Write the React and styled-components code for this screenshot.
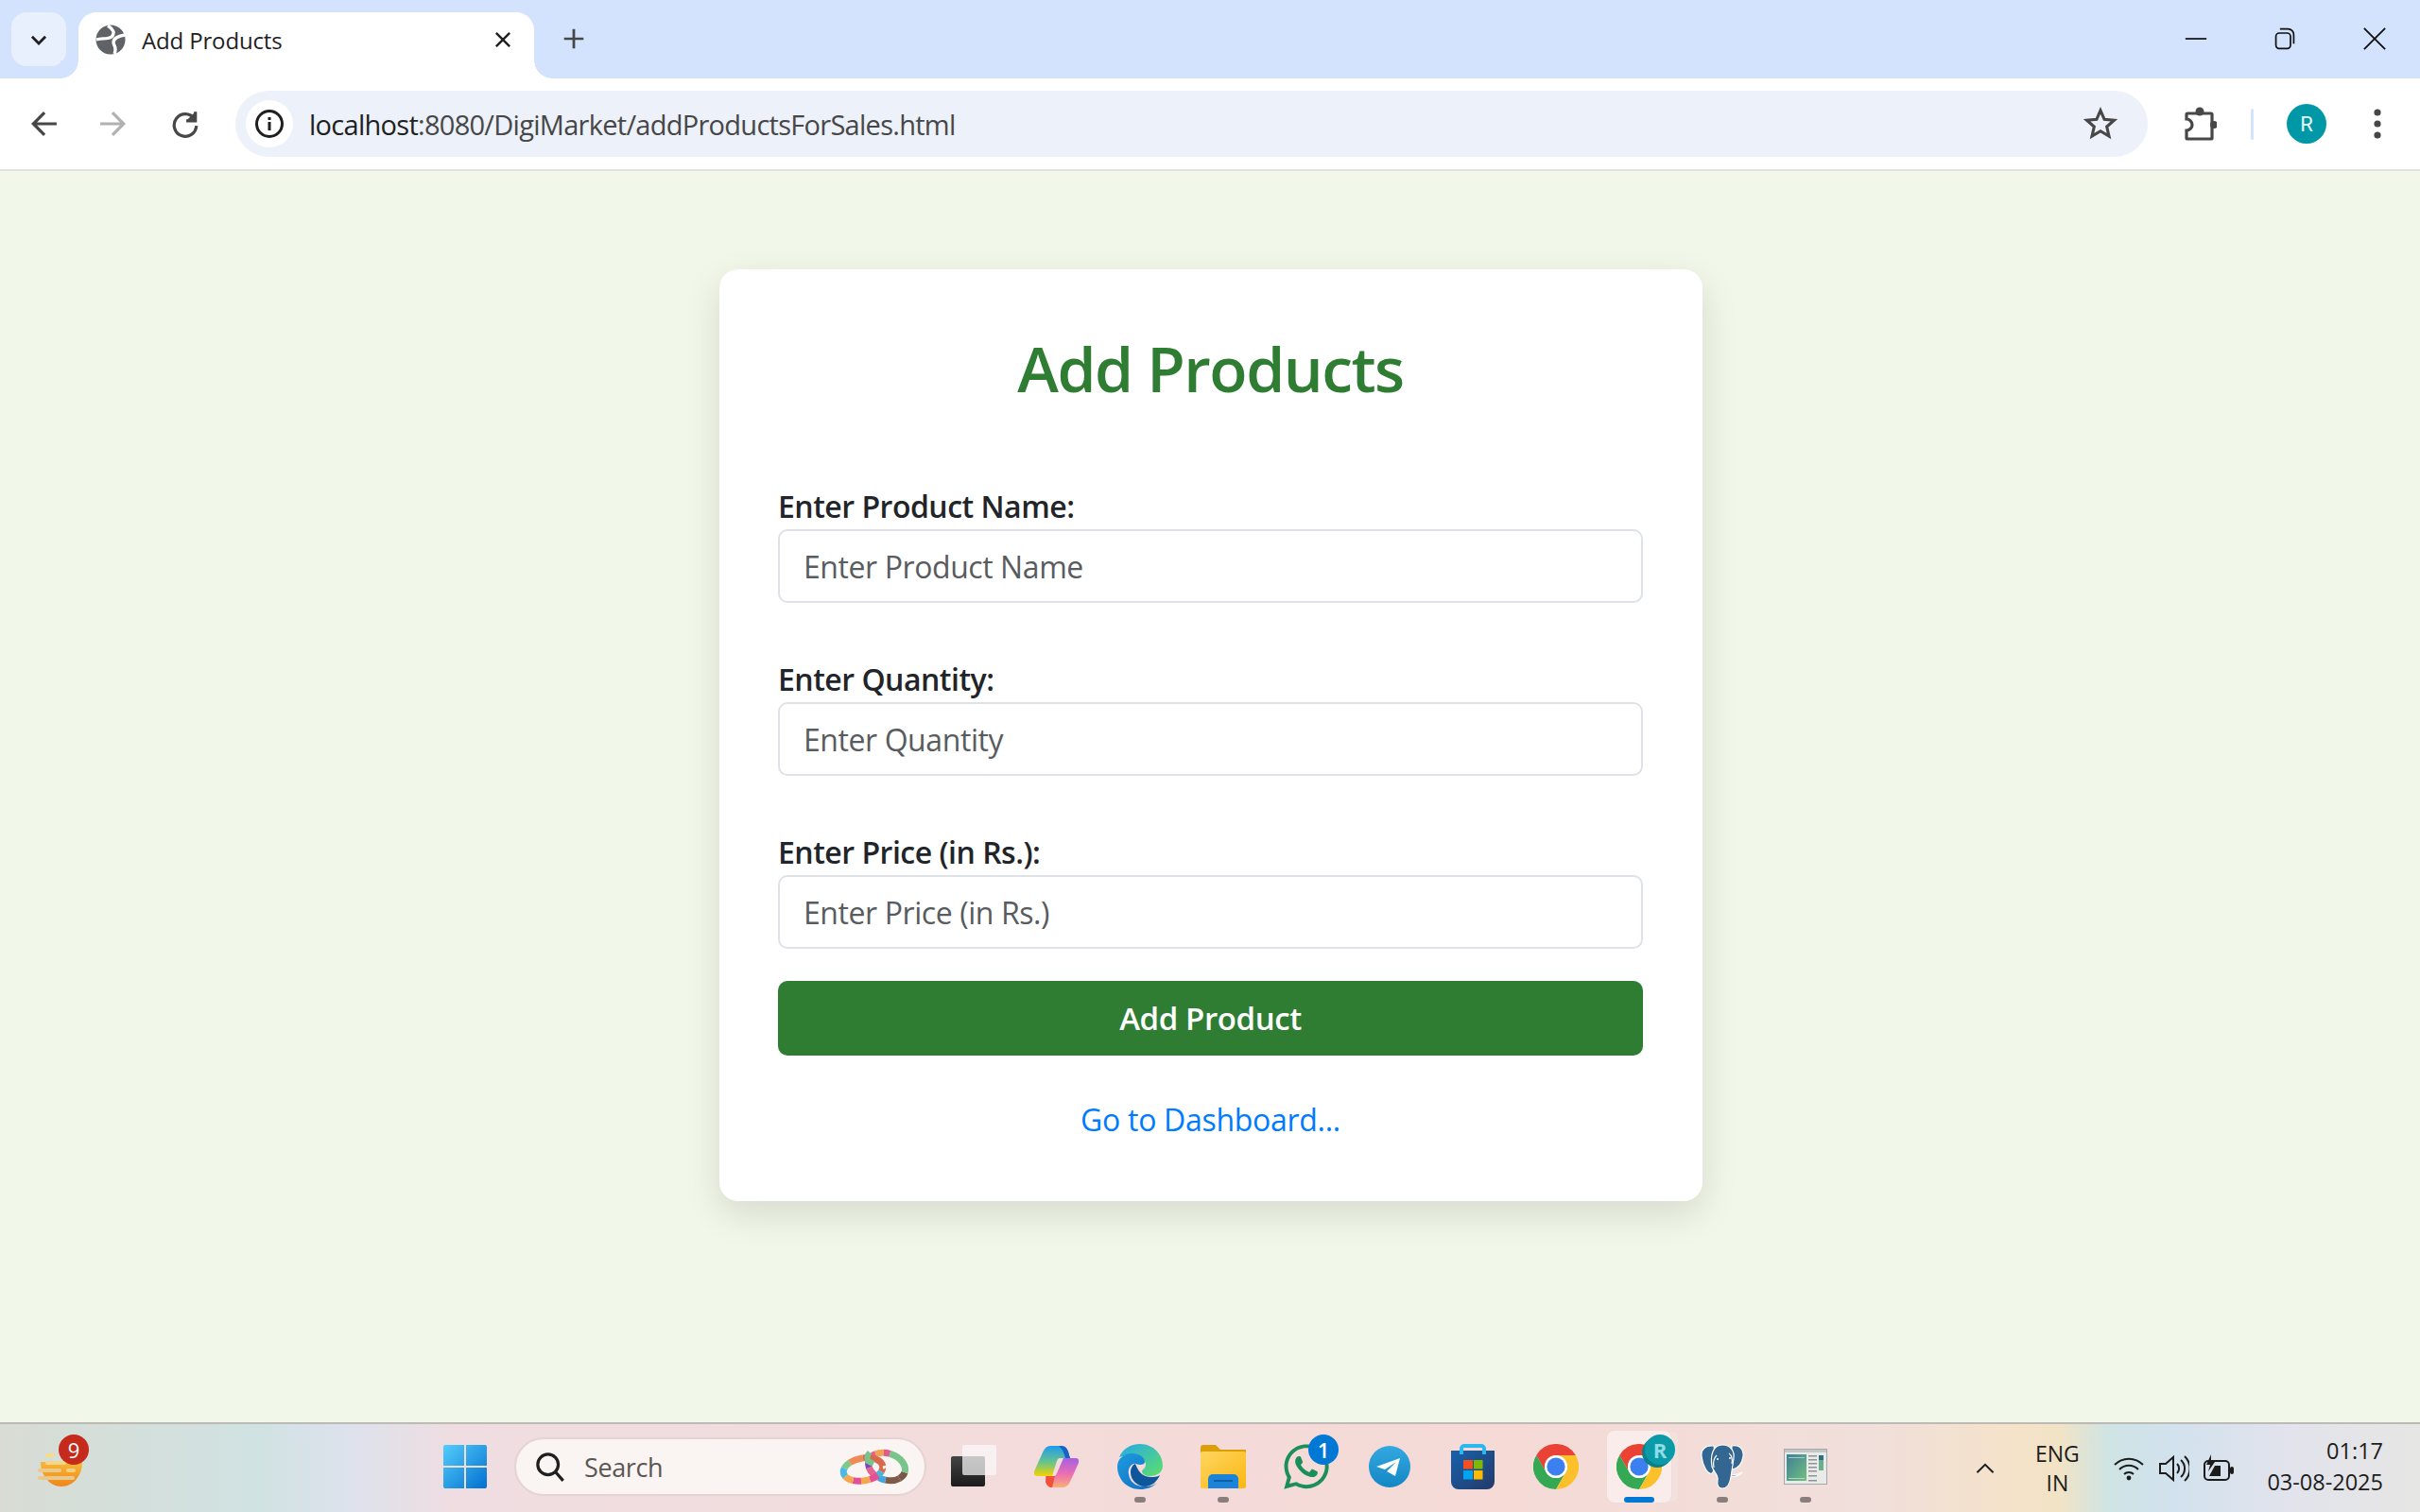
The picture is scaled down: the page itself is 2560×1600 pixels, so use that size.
import React from 'react';
import styled, { createGlobalStyle } from 'styled-components';
import { FaWhatsapp } from 'react-icons/fa';

const GlobalStyle = createGlobalStyle`
  html, body { margin: 0; padding: 0; height: 100%; overflow: hidden; }
  body { font-family: "Open Sans", "Noto Sans", sans-serif; background: #f1f8e9; }
  * { box-sizing: border-box; }
`;

const Screen = styled.div`
  display: flex;
  flex-direction: column;
  height: 100vh;
`;

/* browser chrome */
const TabStrip = styled.div`
  display: flex;
  align-items: flex-end;
  height: 83px;
  padding-left: 12px;
  background: #d3e3fd;
`;

const TabSearch = styled.div`
  display: flex;
  align-items: center;
  justify-content: center;
  width: 58px;
  height: 57px;
  margin-bottom: 13px;
  border-radius: 16px;
  background: #e9f0fd;
`;

const Tab = styled.div`
  position: relative;
  display: flex;
  align-items: center;
  width: 482px;
  height: 70px;
  margin-left: 13px;
  padding: 0 23px 12px 18px;
  border-radius: 19px 19px 0 0;
  background: #fff;

  &::before, &::after {
    content: '';
    position: absolute;
    bottom: 0;
    width: 19px;
    height: 19px;
    background: radial-gradient(circle at 0 0, #d3e3fd 18.5px, #fff 19px);
  }
  &::before { left: -19px; }
  &::after { right: -19px; transform: scaleX(-1); }
`;

const TabTitle = styled.span`
  flex: 1;
  margin-left: 17px;
  font-size: 24px;
  letter-spacing: -0.15px;
  color: #1f1f1f;
`;

const NewTab = styled.div`
  display: flex;
  align-items: center;
  justify-content: center;
  width: 44px;
  height: 44px;
  margin: 0 0 20px 20px;
`;

const WindowControls = styled.div`
  display: flex;
  align-items: center;
  margin-left: auto;
  margin-bottom: 29px;
  padding-right: 35px;
  gap: 70px;
`;

const Toolbar = styled.div`
  display: flex;
  align-items: center;
  height: 98px;
  padding-left: 24px;
  background: #fff;
  border-bottom: 2px solid #e1e1e1;
`;

const NavButton = styled.div`
  display: flex;
  align-items: center;
  justify-content: center;
  width: 44px;
  height: 44px;
  margin-right: ${p => p.$gap}px;
`;

const Omnibox = styled.div`
  display: flex;
  align-items: center;
  width: 2023px;
  height: 70px;
  margin-left: -1px;
  padding: 0 32px 0 11px;
  border-radius: 35px;
  background: #ecf1fa;
`;

const SiteInfo = styled.div`
  display: flex;
  align-items: center;
  justify-content: center;
  width: 50px;
  height: 50px;
  border-radius: 50%;
  background: #fff;
`;

const Url = styled.span`
  flex: 1;
  margin-left: 17px;
  font-size: 29px;
  letter-spacing: -0.72px;
  color: #474747;
  b { font-weight: 400; color: #1f1f1f; }
`;

const ToolbarRight = styled.div`
  display: flex;
  align-items: center;
  margin-left: 37px;
`;

const Divider = styled.div`
  width: 3px;
  height: 33px;
  margin: 0 35px 0 36px;
  border-radius: 2px;
  background: #d3e3fd;
`;

const Avatar = styled.div`
  display: flex;
  align-items: center;
  justify-content: center;
  width: 42px;
  height: 42px;
  margin-right: 50px;
  border-radius: 50%;
  font-family: "Roboto", sans-serif;
  font-size: 22px;
  color: #e8fbfb;
  background: #0097a7;
`;

/* page */
const Main = styled.main`
  flex: 1;
  display: flex;
  justify-content: center;
  align-items: flex-start;
  padding: 104px 0 0 2px;
  background: #f1f8e9;
`;

const Card = styled.div`
  width: 1040px;
  height: 986px;
  padding: 64px 63px 0 62px;
  border-radius: 20px;
  background: #fff;
  box-shadow: 0 13px 38px rgba(0, 0, 0, 0.12);
`;

const Title = styled.h2`
  margin: 0 0 83px;
  font-size: 66px;
  line-height: 80px;
  font-weight: 600;
  text-align: center;
  letter-spacing: -1.5px;
  color: #2e7d32;
`;

const Field = styled.div`
  margin-bottom: ${p => p.$gap}px;
`;

const Label = styled.label`
  display: block;
  height: 48px;
  font-size: 32px;
  line-height: 48px;
  font-weight: 600;
  letter-spacing: -0.5px;
  color: #212529;
`;

const Input = styled.input`
  display: block;
  width: 100%;
  height: 78px;
  padding: 1px 25px 0;
  border: 2px solid #dee2e6;
  border-radius: 10px;
  outline: none;
  background: #fff;
  font-family: inherit;
  font-size: 32px;
  letter-spacing: -0.42px;
  color: #212529;
  &::placeholder { color: #595c5f; opacity: 1; }
`;

const Submit = styled.button`
  display: block;
  width: 100%;
  height: 79px;
  border: none;
  border-radius: 10px;
  background: #2e7d32;
  font-family: inherit;
  font-size: 33px;
  font-weight: 600;
  letter-spacing: -0.4px;
  color: #fff;
`;

const DashLink = styled.a`
  display: block;
  margin-top: 46px;
  font-size: 32px;
  line-height: 44px;
  letter-spacing: -0.3px;
  text-align: center;
  color: #007bff;
  text-decoration: none;
`;

/* taskbar */
const Taskbar = styled.footer`
  display: flex;
  align-items: center;
  height: 95px;
  border-top: 2px solid #bdb9b6;
  background: linear-gradient(90deg, #d8dcd4 0, #d0e2e2 270px, #dde2ec 370px, #efdde1 480px, #f3dcdc 1000px, #f5dad6 1600px, #f1dfdb 1980px, #f4e2c9 2130px, #f1e3c6 2180px, #cfe4e4 2230px, #d2e2ee 2300px, #e2e3ec 2420px, #e6e6e4 2560px);
`;

const TrayApp = styled.div`
  position: relative;
  display: flex;
  width: 48px;
  height: 44px;
  margin: 0 0 3px 40px;
`;

const Badge = styled.span`
  position: absolute;
  top: ${p => p.$top}px;
  right: ${p => p.$right}px;
  display: flex;
  align-items: center;
  justify-content: center;
  width: 32px;
  height: 32px;
  border-radius: 50%;
  font-size: 22px;
  font-weight: ${p => p.$weight || 400};
  color: ${p => p.$text || '#fff'};
  background: ${p => p.$color};
  box-shadow: ${p => p.$shadow || 'none'};
`;

const Center = styled.div`
  display: flex;
  align-items: center;
  margin: 0 0 3px 381px;
`;

const SearchPill = styled.div`
  display: flex;
  align-items: center;
  width: 436px;
  height: 62px;
  margin: 0 26px 0 29px;
  padding: 0 16px 0 20px;
  border: 2px solid #e5d4d2;
  border-radius: 31px;
  background: #faf4f3;
  font-size: 27px;
  letter-spacing: -0.4px;
  color: #5a5656;
`;

const SearchLabel = styled.span`
  flex: 1;
  margin-left: 20px;
`;

const PinnedIcon = styled.div`
  display: flex;
  margin-right: 20px;
`;

const AppSlot = styled.div`
  position: relative;
  display: flex;
  align-items: center;
  justify-content: center;
  width: 88px;
  height: 76px;
`;

const ActiveSlot = styled(AppSlot)`
  width: 68px;
  margin: 0 10px;
  border-radius: 8px;
  background: #f9ecea;
  box-shadow: 0 0 0 1px #eedcd8, 8px 0 0 -1px #f3e1dd;
`;

const RunningDot = styled.span`
  position: absolute;
  bottom: 0;
  left: 50%;
  width: ${p => (p.$active ? 32 : 12)}px;
  height: 6px;
  margin-left: ${p => (p.$active ? -16 : -6)}px;
  border-radius: 3px;
  background: ${p => (p.$active ? '#0078d4' : '#8a7e7c')};
`;

const Tray = styled.div`
  display: flex;
  align-items: center;
  margin-left: auto;
  padding-right: 39px;
  color: #1c1c1c;
`;

const Lang = styled.div`
  width: 60px;
  margin: 0 30px 0 34px;
  font-size: 23px;
  line-height: 31px;
  text-align: center;
`;

const StatusIcons = styled.div`
  display: flex;
  align-items: center;
  gap: 15.5px;
  margin-right: 35px;
`;

const Clock = styled.div`
  margin-bottom: 4px;
  font-size: 23.5px;
  line-height: 33px;
  text-align: right;
`;

/* icons */
const Globe = () => (
  <svg width="32" height="32" viewBox="0 0 32 32" fill="none">
    <circle cx="16" cy="16" r="15.5" fill="#5f6368" />
    <path d="M13 1c6 4 8 8 4 12-4 3-11 1-16 3M31 11c-6 1-12 3-12 8 0 3 4 5 1 12" stroke="#fff" strokeWidth="3.4" />
  </svg>
);

const StrokeIcon = ({ size = 28, color = '#474747', width = 2.6, children }) => (
  <svg width={size} height={size} viewBox="0 0 28 28" fill="none" stroke={color} strokeWidth={width} strokeLinecap="butt" strokeLinejoin="miter">
    {children}
  </svg>
);

const ExtensionsIcon = () => (
  <svg width="36" height="36" viewBox="0 0 36 36" fill="none">
    <path d="M5 7H30a1 1 0 0 1 1 1V33a1 1 0 0 1-1 1H5a1 1 0 0 1-1-1V25a6 6 0 0 0 0-12V8a1 1 0 0 1 1-1z" stroke="#474747" strokeWidth="3.2" />
    <circle cx="18" cy="5" r="4.5" fill="#474747" />
    <circle cx="33" cy="19" r="4" fill="#474747" />
  </svg>
);

const WindowsLogo = () => (
  <svg width="46" height="46" viewBox="0 0 46 46">
    <defs>
      <linearGradient id="wl" x1="0" y1="0" x2="1" y2="1">
        <stop offset="0" stopColor="#55cdfb" />
        <stop offset="1" stopColor="#0070d0" />
      </linearGradient>
    </defs>
    <path d="M0 2a2 2 0 0 1 2-2h20v22H0zM24 0h20a2 2 0 0 1 2 2v20H24zM0 24h22v22H2a2 2 0 0 1-2-2zM24 24h22v20a2 2 0 0 1-2 2H24z" fill="url(#wl)" />
  </svg>
);

// one tilted ring, painted in coloured bands round its length
const Ring = ({ cx, cy, rx, ry, tilt, bands }) => {
  let start = 0;
  return (
    <g transform={`rotate(${tilt} ${cx} ${cy})`}>
      {bands.map(([color, len], i) => {
        const el = (
          <ellipse key={i} cx={cx} cy={cy} rx={rx} ry={ry} pathLength="100" stroke={color}
            strokeDasharray={`${len} ${100 - len}`} strokeDashoffset={-start} />
        );
        start += len;
        return el;
      })}
    </g>
  );
};

const Rings = () => (
  <svg width="74" height="42" viewBox="0 0 74 42" fill="none" strokeWidth="7">
    <Ring cx={50} cy={21} rx={20} ry={14} tilt={18} bands={[
      ['#7a5648', 8], ['#7d5a4a', 14], ['#3fa6e2', 7], ['#e6628f', 14], ['#7a45c0', 9], ['#e6628f', 8], ['#f3a24f', 8], ['#e05a90', 6], ['#78c48a', 26]
    ]} />
    <Ring cx={25} cy={24} rx={21} ry={12} tilt={-10} bands={[
      ['#d9694c', 6], ['#45b8d8', 5], ['#e44f95', 9], ['#f5a74d', 9], ['#e44f95', 8], ['#f5a74d', 9], ['#4bb9e6', 9], ['#7ec98a', 8], ['#ef8a55', 14], ['#d9694c', 23]
    ]} />
    <path d="M32 6c-3 3-3 6-2 9l6 3" stroke="#78c48a" strokeWidth="6" />
  </svg>
);

const Terminal = () => (
  <svg width="48" height="46" viewBox="0 0 48 46">
    <defs>
      <linearGradient id="tm" x1="0" y1="0" x2="0" y2="1">
        <stop offset="0" stopColor="#444" />
        <stop offset="1" stopColor="#1b1b1b" />
      </linearGradient>
    </defs>
    <rect x="0" y="12" width="36" height="32" rx="2" fill="url(#tm)" />
    <rect x="12" y="0" width="36" height="32" rx="2" fill="#fbfafa" opacity="0.72" />
  </svg>
);

const Copilot = () => (
  <svg width="48" height="46" viewBox="0 0 48 46">
    <defs>
      <linearGradient id="cp1" x1="0" y1="0" x2="0" y2="1">
        <stop offset="0" stopColor="#1e9cf0" />
        <stop offset="0.55" stopColor="#6ac48a" />
        <stop offset="1" stopColor="#f5d400" />
      </linearGradient>
      <linearGradient id="cp2" x1="0" y1="0" x2="0" y2="1">
        <stop offset="0" stopColor="#a65fe6" />
        <stop offset="0.55" stopColor="#ec6fb0" />
        <stop offset="1" stopColor="#f9b078" />
      </linearGradient>
    </defs>
    <path d="M17 1H29Q34 1 36 7L38 14H27Q25 14 24 17L19 33H3Q-1 33 0 28L9 8Q12 1 17 1z" fill="url(#cp1)" />
    <path d="M26 1H29Q34 1 36 7L38 14H33Q31 5 26 1z" fill="#1a62c8" />
    <path d="M31 14H44Q48 14 47 19L38 39Q35 45 30 45H18Q14 45 12 39L12 33H21Q23 33 24 30z" fill="url(#cp2)" />
    <path d="M13 33H22L19 45Q14 45 12 39z" fill="#f0503c" />
  </svg>
);

const Edge = () => (
  <svg width="48" height="48" viewBox="0 0 48 48">
    <defs>
      <linearGradient id="ed1" x1="0" y1="0" x2="1" y2="1">
        <stop offset="0" stopColor="#25a8e8" />
        <stop offset="1" stopColor="#5fe06a" />
      </linearGradient>
      <linearGradient id="ed2" x1="0" y1="0" x2="1" y2="1">
        <stop offset="0" stopColor="#1f9be0" />
        <stop offset="1" stopColor="#0d6cc0" />
      </linearGradient>
    </defs>
    <path d="M2 14C6 5 14 0 24 0c14 0 24 11 24 23 0 7-6 11-13 11-5 0-9-2-9-5 0-2 4-3 4-7 0-6-7-10-14-10C10 12 5 13 2 14z" fill="url(#ed1)" />
    <path d="M0 24C0 15 8 10 15 10c8 0 14 4 14 9 0 2-2 3-5 3-2 0-5-2-7-1-4 2-6 6-5 11 1 8 8 14 18 13 4 0 8-1 12-4-5 5-11 7-18 7C10 48 0 37 0 24z" fill="url(#ed2)" />
    <path d="M14 30c0-4 2-8 5-9 2 5 6 14 16 14 4 0 7 0 10-2-3 7-9 12-16 12-8 0-15-7-15-15z" fill="#0e569c" />
  </svg>
);

const Folder = () => (
  <svg width="48" height="46" viewBox="0 0 48 46">
    <defs>
      <linearGradient id="fd" x1="0" y1="0" x2="1" y2="1">
        <stop offset="0" stopColor="#ffd65f" />
        <stop offset="1" stopColor="#fbb614" />
      </linearGradient>
    </defs>
    <path d="M0 3a3 3 0 0 1 3-3h13l5 5h27v10H0z" fill="#dc9f08" />
    <rect x="0" y="7" width="48" height="39" rx="2" fill="url(#fd)" />
    <path d="M8 46V36a5 5 0 0 1 5-5h22a5 5 0 0 1 5 5v10z" fill="#1b84d8" />
    <rect x="14" y="37" width="20" height="2" fill="#0f5ea8" />
  </svg>
);

const Telegram = () => (
  <svg width="44" height="44" viewBox="0 0 44 44">
    <defs>
      <linearGradient id="tg" x1="0" y1="0" x2="0" y2="1">
        <stop offset="0" stopColor="#35a8e0" />
        <stop offset="1" stopColor="#1287c4" />
      </linearGradient>
    </defs>
    <circle cx="22" cy="22" r="22" fill="url(#tg)" />
    <path d="M33 13L8 22l9 3 12-8-10 10 9 5z" fill="#fff" />
  </svg>
);

const Store = () => (
  <svg width="46" height="48" viewBox="0 0 46 48">
    <defs>
      <linearGradient id="st" x1="0" y1="0" x2="1" y2="1">
        <stop offset="0" stopColor="#1762ad" />
        <stop offset="1" stopColor="#243a68" />
      </linearGradient>
    </defs>
    <path d="M0 7h46v33a8 8 0 0 1-8 8H8a8 8 0 0 1-8-8z" fill="url(#st)" />
    <path d="M11 11V5a3 3 0 0 1 3-3h18a3 3 0 0 1 3 3v6" fill="none" stroke="#2bb8ee" strokeWidth="4" />
    <rect x="13" y="17" width="10" height="9.5" fill="#f25022" />
    <rect x="24" y="17" width="9.5" height="9.5" fill="#7fba00" />
    <rect x="13" y="28" width="10" height="9.5" fill="#00a4ef" />
    <rect x="24" y="28" width="9.5" height="9.5" fill="#ffb900" />
  </svg>
);

const Chrome = () => (
  <svg width="48" height="48" viewBox="0 0 48 48">
    <path d="M3.2 12A24 24 0 0 1 44.8 12H24A12 12 0 0 0 13.6 30z" fill="#ea4335" />
    <path d="M3.2 12L13.6 30A12 12 0 0 0 34.4 30L24 48A24 24 0 0 1 3.2 12z" fill="#34a853" />
    <path d="M44.8 12A24 24 0 0 1 24 48L34.4 30A12 12 0 0 0 24 12z" fill="#fcc02a" />
    <circle cx="24" cy="24" r="12" fill="#fff" />
    <circle cx="24" cy="24" r="9.6" fill="#3b7ff0" />
  </svg>
);

const Postgres = () => (
  <svg width="46" height="48" viewBox="0 0 46 48" fill="#336791" stroke="#fff" strokeWidth="1.2">
    <path d="M14 2C5 1 0 6 1 13c1 9 6 20 11 18 3-2 2-8 4-12z" />
    <path d="M33 2c8-2 13 4 12 11-1 7-5 13-12 14l-2 6c5 0 9-1 13-3-3 3-8 5-13 4z" />
    <path d="M23 1c9 0 13 7 12 14-1 8-2 13-3 20-1 7-4 12-9 12-4 0-6-3-5-9 1-5-4-8-6-14C10 12 13 1 23 1z" />
    <path d="M14 25c-1-5 0-10 3-13M33 21c1-4 0-9-3-11" fill="none" />
    <circle cx="18" cy="16" r="1" fill="#fff" stroke="none" />
    <circle cx="31" cy="15" r="1" fill="#fff" stroke="none" />
  </svg>
);

const AppThumb = () => (
  <svg width="46" height="38" viewBox="0 0 46 38">
    <defs>
      <linearGradient id="th" x1="0" y1="0" x2="1" y2="1">
        <stop offset="0" stopColor="#3e7f96" />
        <stop offset="1" stopColor="#72bf82" />
      </linearGradient>
    </defs>
    <rect x="0.5" y="0.5" width="45" height="37" fill="#e9ebea" stroke="#a5a8a8" />
    <rect x="1" y="1" width="44" height="3" fill="#c4c7c7" />
    <rect x="3" y="6" width="21" height="28" fill="url(#th)" />
    <rect x="5" y="9" width="17" height="1" fill="#9dc9d0" />
    <rect x="5" y="31" width="17" height="1" fill="#a8dcb2" />
    {[7, 11, 15, 19, 23, 28, 33].map(y => <rect key={y} x="26" y={y} width="9" height="1.5" fill="#8f9393" />)}
    <rect x="37" y="7" width="5" height="16" fill="#6fae8d" />
    <rect x="37" y="7" width="5" height="5" fill="#2f6d82" />
  </svg>
);

const fields = [
  { label: 'Enter Product Name:', placeholder: 'Enter Product Name', gap: 57 },
  { label: 'Enter Quantity:', placeholder: 'Enter Quantity', gap: 57 },
  { label: 'Enter Price (in Rs.):', placeholder: 'Enter Price (in Rs.)', gap: 34 }
];

const App = () => (
  <Screen>
    <GlobalStyle />
    <TabStrip>
      <TabSearch>
        <StrokeIcon size={22} color="#1f1f1f" width={3.6}><path d="M5 10l9 9 9-9" /></StrokeIcon>
      </TabSearch>
      <Tab>
        <Globe />
        <TabTitle>Add Products</TabTitle>
        <StrokeIcon size={20} color="#1f1f1f" width={3.4}><path d="M4 4l20 20M24 4L4 24" /></StrokeIcon>
      </Tab>
      <NewTab>
        <StrokeIcon size={24} color="#474747" width={3.2}><path d="M14 2v24M2 14h24" /></StrokeIcon>
      </NewTab>
      <WindowControls>
        <StrokeIcon size={24} color="#111" width={2}><path d="M1 14h26" /></StrokeIcon>
        <StrokeIcon size={24} color="#111" width={2}>
          <rect x="3" y="7" width="18" height="19" rx="4" />
          <path d="M8 2h10a7 7 0 0 1 7 7v11" />
        </StrokeIcon>
        <StrokeIcon size={26} color="#111" width={2}><path d="M2 2l24 24M26 2L2 26" /></StrokeIcon>
      </WindowControls>
    </TabStrip>

    <Toolbar>
      <NavButton $gap={30}>
        <StrokeIcon size={30} width={3}><path d="M27 14H4M15 3L4 14l11 11" /></StrokeIcon>
      </NavButton>
      <NavButton $gap={32}>
        <StrokeIcon size={30} color="#b1b1b1" width={3}><path d="M1 14h23M13 3l11 11-11 11" /></StrokeIcon>
      </NavButton>
      <NavButton $gap={32}>
        <StrokeIcon size={30} width={3}><path d="M23 9a11 11 0 1 0 2 7" /><path d="M24 2v9h-9" fill="#474747" /></StrokeIcon>
      </NavButton>
      <Omnibox>
        <SiteInfo>
          <svg width="32" height="32" viewBox="0 0 32 32">
            <circle cx="16" cy="16" r="13.5" fill="none" stroke="#1f1f1f" strokeWidth="3" />
            <rect x="14.5" y="14" width="3" height="9" fill="#1f1f1f" />
            <rect x="14.5" y="9" width="3" height="3" fill="#1f1f1f" />
          </svg>
        </SiteInfo>
        <Url><b>localhost</b>:8080/DigiMarket/addProductsForSales.html</Url>
        <StrokeIcon size={36} width={2.4}><path d="M14 3l3.2 7.4 8 .7-6 5.3 1.8 7.8-7-4.2-7 4.2 1.8-7.8-6-5.3 8-.7z" /></StrokeIcon>
      </Omnibox>
      <ToolbarRight>
        <ExtensionsIcon />
        <Divider />
        <Avatar>R</Avatar>
        <svg width="8" height="32" viewBox="0 0 8 32">
          <circle cx="4" cy="4" r="3.6" fill="#474747" />
          <circle cx="4" cy="16" r="3.6" fill="#474747" />
          <circle cx="4" cy="28" r="3.6" fill="#474747" />
        </svg>
      </ToolbarRight>
    </Toolbar>

    <Main>
      <Card>
        <Title>Add Products</Title>
        {fields.map(f => (
          <Field key={f.label} $gap={f.gap}>
            <Label>{f.label}</Label>
            <Input placeholder={f.placeholder} />
          </Field>
        ))}
        <Submit>Add Product</Submit>
        <DashLink href="#">Go to Dashboard...</DashLink>
      </Card>
    </Main>

    <Taskbar>
      <TrayApp>
        <svg width="48" height="44" viewBox="0 0 48 44">
          <defs>
            <linearGradient id="bowl" x1="0" y1="0" x2="0" y2="1">
              <stop offset="0" stopColor="#f6b93a" />
              <stop offset="1" stopColor="#f0851a" />
            </linearGradient>
          </defs>
          <path d="M3 17H47C47 32 37 43 25 43C13 43 3 32 3 17z" fill="url(#bowl)" />
          <rect x="8" y="8" width="10" height="4" rx="2" fill="#f7db8c" />
          <rect x="8" y="16" width="22" height="4" rx="2" fill="#f3d68a" />
          <rect x="0" y="24" width="25" height="4" rx="2" fill="#ecc987" />
          <rect x="30" y="24" width="10" height="4" rx="2" fill="#f3cf80" />
          <rect x="0" y="32" width="39" height="4" rx="2" fill="#e9c88b" />
        </svg>
        <Badge $top={-12} $right={-6} $color="#c42b1c">9</Badge>
      </TrayApp>
      <Center>
        <WindowsLogo />
        <SearchPill>
          <StrokeIcon size={32} color="#1f1f1f" width={2.8}><circle cx="12" cy="12" r="9.5" /><path d="M19 19l7 8" /></StrokeIcon>
          <SearchLabel>Search</SearchLabel>
          <Rings />
        </SearchPill>
        <PinnedIcon><Terminal /></PinnedIcon>
        <AppSlot><Copilot /></AppSlot>
        <AppSlot><Edge /><RunningDot /></AppSlot>
        <AppSlot><Folder /><RunningDot /></AppSlot>
        <AppSlot>
          <FaWhatsapp size={54} color="#1b8f5a" />
          <Badge $top={4} $right={10} $color="#0078d4" $weight={600}>1</Badge>
        </AppSlot>
        <AppSlot><Telegram /></AppSlot>
        <AppSlot><Store /></AppSlot>
        <AppSlot><Chrome /></AppSlot>
        <ActiveSlot>
          <Chrome />
          <Badge $top={4} $right={-4} $color="#0a9aa8" $text="#8fdde2" $weight={700} $shadow="-3px 3px 0 #0b7f8c">R</Badge>
          <RunningDot $active />
        </ActiveSlot>
        <AppSlot><Postgres /><RunningDot /></AppSlot>
        <AppSlot><AppThumb /><RunningDot /></AppSlot>
      </Center>
      <Tray>
        <StrokeIcon size={24} color="#1c1c1c" width={2.2}><path d="M4 19L14 9l10 10" /></StrokeIcon>
        <Lang>ENG<br />IN</Lang>
        <StatusIcons>
          <svg width="32" height="26" viewBox="0 0 32 26" fill="none" stroke="#1c1c1c" strokeWidth="2">
            <path d="M1 9a21 21 0 0 1 30 0M6 14a14 14 0 0 1 20 0M11 19a7 7 0 0 1 10 0" />
            <circle cx="16" cy="23" r="2.4" fill="#1c1c1c" stroke="none" />
          </svg>
          <svg width="32" height="30" viewBox="0 0 32 30" fill="none" stroke="#1c1c1c" strokeWidth="2">
            <path d="M1 10h6l8-7v24l-8-7H1z" />
            <path d="M19 10a7 7 0 0 1 0 10M23 6a12 12 0 0 1 0 18M27 2a18 18 0 0 1 0 26" />
          </svg>
          <svg width="32" height="30" viewBox="0 0 32 30" fill="none">
            <rect x="1" y="7" width="26" height="20" rx="4" stroke="#1c1c1c" strokeWidth="2" />
            <rect x="28" y="13" width="4" height="8" rx="2" fill="#1c1c1c" />
            <path d="M6 23l6-11h6v11z" fill="#1c1c1c" />
            <path d="M8 0L3 11h4l-2 7 7-10H8z" fill="#1c1c1c" />
          </svg>
        </StatusIcons>
        <Clock>01:17<br />03-08-2025</Clock>
      </Tray>
    </Taskbar>
  </Screen>
);

export default App;
